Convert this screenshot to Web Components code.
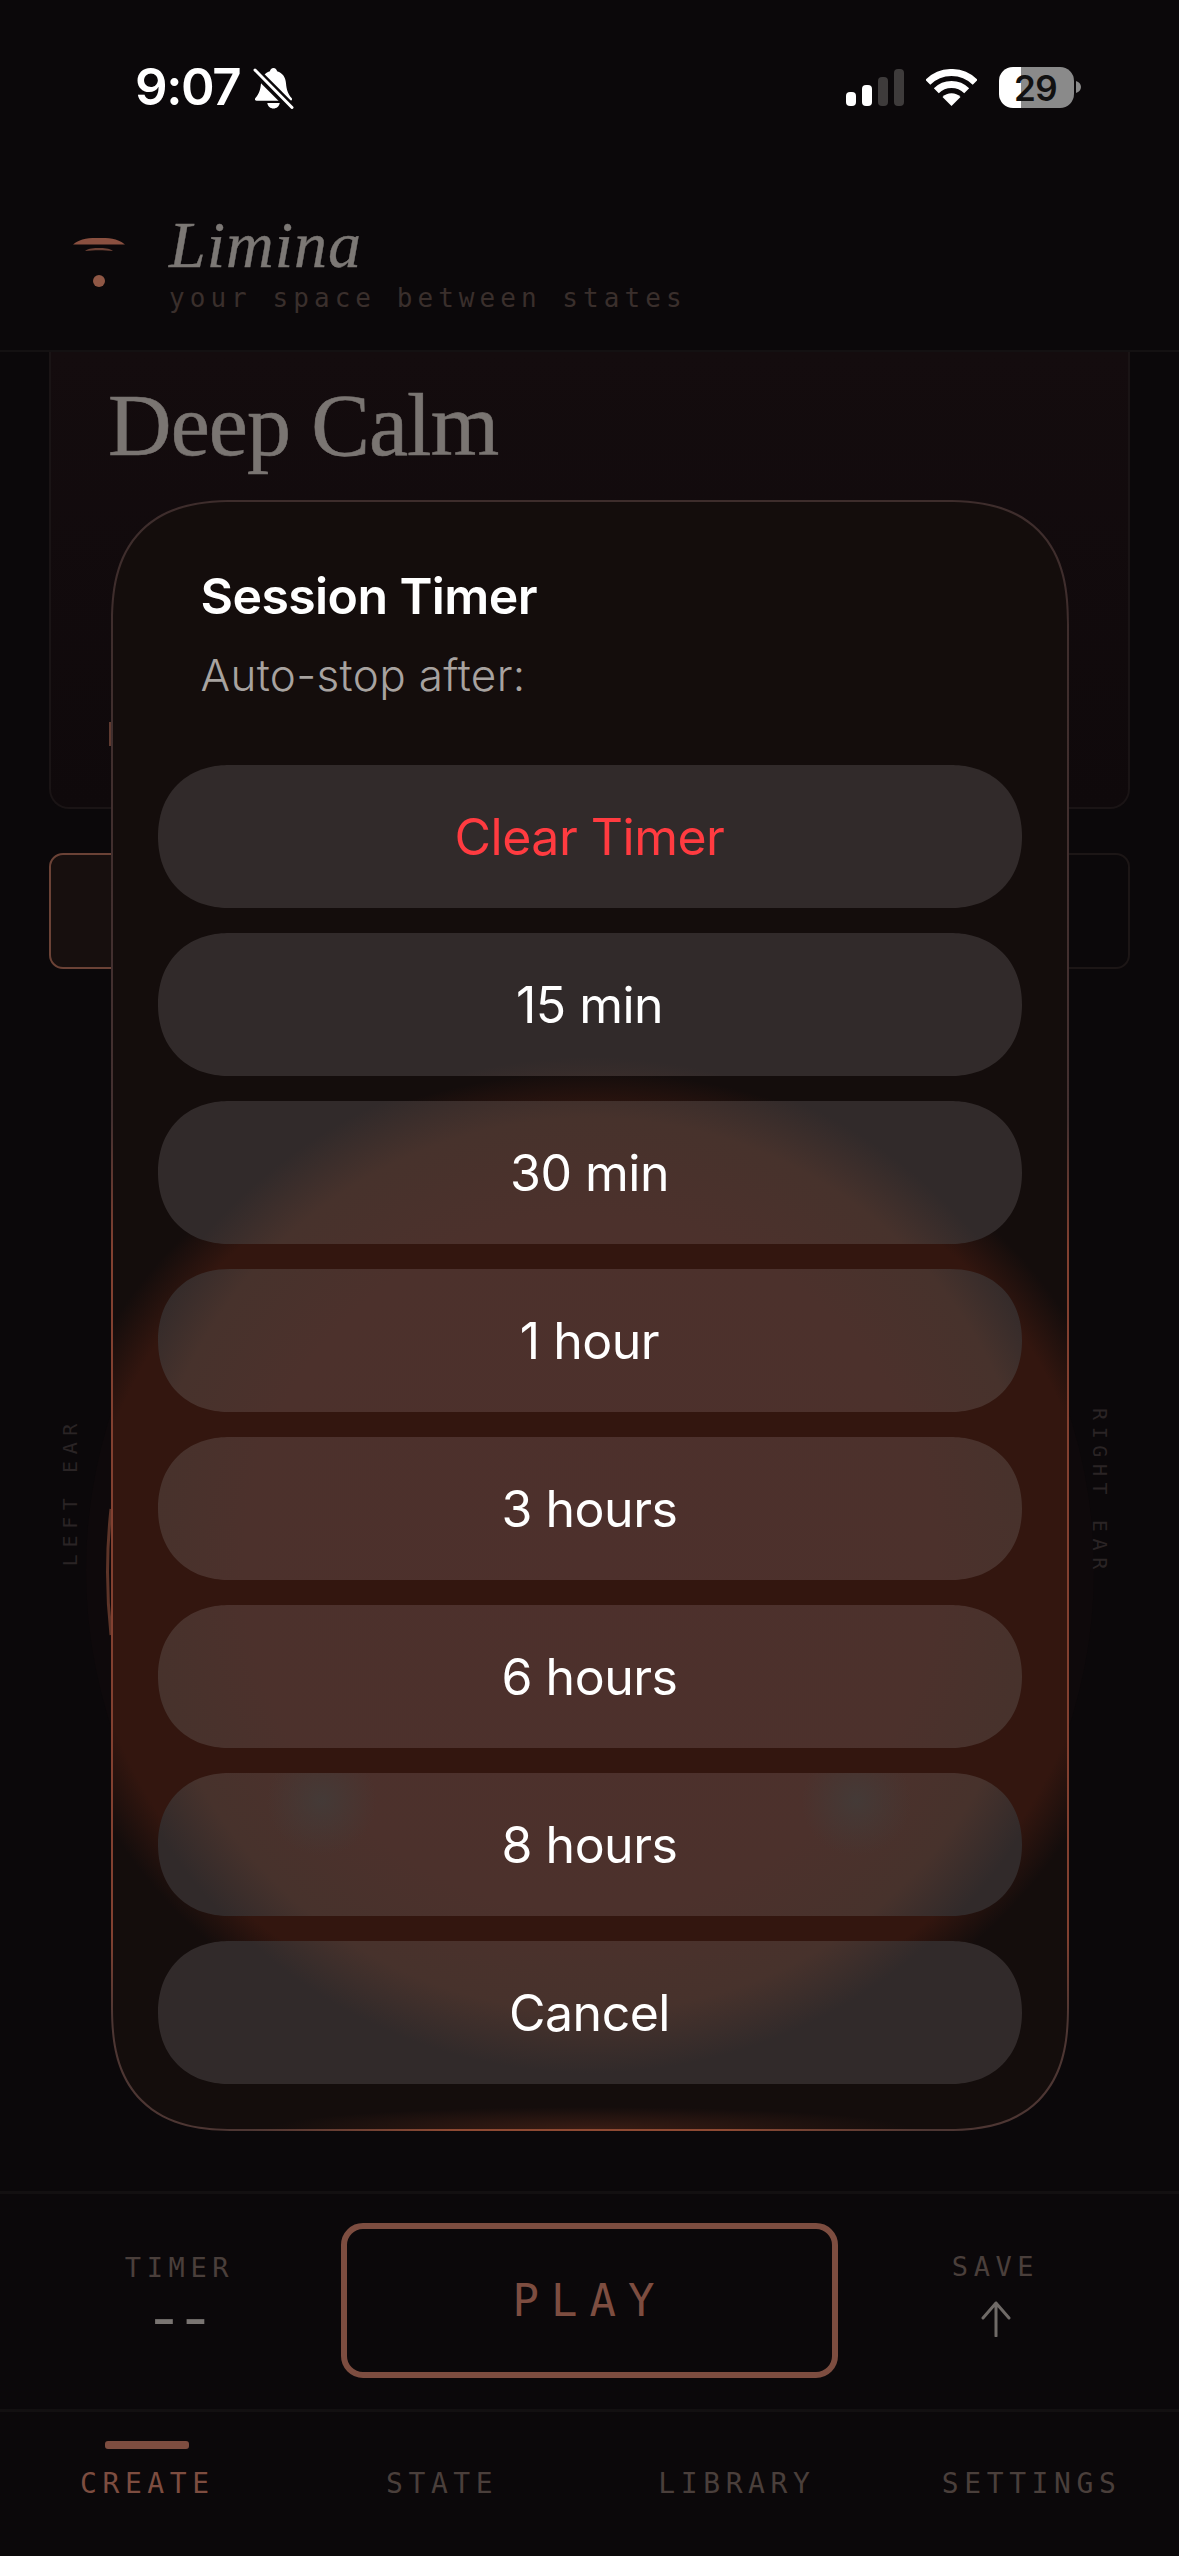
<!DOCTYPE html>
<html lang="en">
<head>
<meta charset="utf-8">
<title>Limina</title>
<style>
  html, body { margin: 0; padding: 0; background: #0b080a; }
  body { width: 1179px; height: 2556px; overflow: hidden; position: relative; }
  limina-app { --mono: "DejaVu Sans Mono", monospace; --sans: Inter, "Noto Sans", sans-serif; --serif: "Liberation Serif", serif; --accent: #7d4d40; --dim: #4a3f3b; }
</style>
</head>
<body>
<limina-app>
  <status-bar slot="status"></status-bar>
  <app-header slot="header"></app-header>
  <session-card slot="card" title="Deep Calm"></session-card>
  <mode-row slot="modes"></mode-row>
  <ear-stage slot="stage"></ear-stage>
  <action-bar slot="actions"></action-bar>
  <nav-bar slot="nav"></nav-bar>
  <timer-dialog slot="dialog">
    <dialog-option danger>Clear Timer</dialog-option>
    <dialog-option>15 min</dialog-option>
    <dialog-option>30 min</dialog-option>
    <dialog-option>1 hour</dialog-option>
    <dialog-option>3 hours</dialog-option>
    <dialog-option>6 hours</dialog-option>
    <dialog-option>8 hours</dialog-option>
    <dialog-option>Cancel</dialog-option>
  </timer-dialog>
</limina-app>

<script>
function define(name, html) {
  customElements.define(name, class extends HTMLElement {
    constructor() {
      super();
      this.attachShadow({ mode: 'open' }).innerHTML = html;
    }
  });
}

define('limina-app', `
  <style>
    :host { display: flex; flex-direction: column; width: 1179px; height: 2556px; position: relative; background: #0b080a; overflow: hidden; }
    main { flex: 1; display: flex; flex-direction: column; min-height: 0; padding: 0 49px; position: relative; }
    .overlay { position: absolute; inset: 0; display: flex; justify-content: center; align-items: flex-start; padding-top: 500px; box-sizing: border-box; }
  </style>
  <slot name="status"></slot>
  <slot name="header"></slot>
  <main>
    <slot name="card"></slot>
    <slot name="modes"></slot>
    <slot name="stage"></slot>
  </main>
  <slot name="actions"></slot>
  <slot name="nav"></slot>
  <div class="overlay"><slot name="dialog"></slot></div>
`);

define('status-bar', `
  <style>
    :host { display: flex; align-items: flex-start; height: 134px; padding: 60px 98px 0 135px; box-sizing: border-box; color: #fff; font-family: Inter, sans-serif; }
    .time { font-size: 51px; font-weight: 600; line-height: 54px; letter-spacing: -1.4px; }
    .bell { margin: 7px 0 0 13px; }
    .right { margin-left: auto; display: flex; align-items: flex-start; }
    .signal { margin: 9px 0 0 0; }
    .wifi { margin: 9px 0 0 22px; }
    .battery { margin: 7px 0 0 22px; width: 75px; height: 41px; border-radius: 14px; background: linear-gradient(90deg, #fff 29%, #8a8a8a 29%); color: #111; font-size: 35px; font-weight: 600; display: flex; align-items: center; justify-content: center; letter-spacing: -.5px; padding-right: 2px; box-sizing: border-box; }
    .nub { margin: 21px 0 0 2px; }
  </style>
  <div class="time">9:07</div>
  <svg class="bell" width="41" height="42" viewBox="0 0 41 42">
    <path fill="#fff" d="M20.500 1c2 0 3.200 1.300 3.600 3.200 5.500 1.600 8.400 6 8.900 12 .5 6 1.700 10.500 5.600 14.800 1 1.200.4 2.800-1.300 2.800H3.700c-1.700 0-2.300-1.600-1.300-2.800 3.900-4.300 5.100-8.800 5.600-14.800.5-6 3.400-10.400 8.900-12C17.300 2.300 18.500 1 20.500 1zM14.300 36h12.400c-.5 3.300-3 5.500-6.200 5.500s-5.700-2.200-6.200-5.500z"/>
    <path stroke="#0b080a" stroke-width="9" d="M0 2l40 40"/>
    <path stroke="#fff" stroke-width="3" stroke-linecap="round" d="M2 3l37 37.500"/>
  </svg>
  <div class="right">
    <svg class="signal" width="58" height="37" viewBox="0 0 58 37">
      <rect x="0" y="23" width="10" height="14" rx="4" fill="#fff"/>
      <rect x="16" y="16" width="10" height="21" rx="4" fill="#fff"/>
      <rect x="32" y="8" width="10" height="29" rx="4" fill="#3e3b3b"/>
      <rect x="48" y="0" width="10" height="37" rx="4" fill="#3e3b3b"/>
    </svg>
    <svg class="wifi" width="51" height="37" viewBox="0 0 51 37">
      <g fill="none" stroke="#fff" stroke-width="7">
        <path d="M1.800 13.300A33.500 33.500 0 0 1 49.200 13.300"/>
        <path d="M10.300 21.800A21.500 21.500 0 0 1 40.700 21.800"/>
      </g>
      <path fill="#fff" d="M25.500 37L16.500 28A12.700 12.700 0 0 1 34.500 28Z"/>
    </svg>
    <div class="battery">29</div>
    <svg class="nub" width="5" height="12" viewBox="0 0 5 12"><path fill="#8a8a8a" d="M0 0c3 1 5 3 5 6s-2 5-5 6z"/></svg>
  </div>
`);

define('app-header', `
  <style>
    :host { display: flex; align-items: flex-start; height: 218px; box-sizing: border-box; border-bottom: 2px solid #141112; padding: 0 0 0 70px; position: relative; }
    svg { margin: 101px 0 0 3px; flex: none; }
    .text { margin: 73px 0 0 44px; }
    h1 { margin: 0; font: italic 400 66px/75px var(--serif); color: #7c7875; letter-spacing: 1px; -webkit-text-stroke: .4px #7c7875; }
    p { margin: 0; font: 400 26px/33px var(--mono); color: #3a2f2c; letter-spacing: 5.05px; }
  </style>
  <svg width="52" height="52" viewBox="0 0 52 52">
    <path fill="#8a5040" d="M0 9.500C8 3 17 3 26 3s18 0 26 6.500H0z"/>
    <path fill="#6e4236" d="M12 16c4-3 9-3 14-3s10 0 14 3c-5-.6-9-.8-14-.8s-9 .2-14 .8z"/>
    <circle cx="26" cy="46" r="6" fill="#8f5745"/>
  </svg>
  <div class="text">
    <h1>Limina</h1>
    <p>your space between states</p>
  </div>
`);

define('session-card', `
  <style>
    :host { display: block; height: 457px; box-sizing: border-box; border: 2px solid #1a1415; border-top: 0; border-radius: 0 0 20px 20px; background: linear-gradient(180deg, #140c0e 0, #0f090b 100%); padding: 0 0 0 57px; position: relative; }
    h2 { margin: 0; font: 400 88px/100px var(--serif); color: #7a7572; letter-spacing: -.9px; padding-top: 24px; -webkit-text-stroke: .6px #7a7572; }
    .thumb { position: absolute; left: 58px; top: 370px; width: 4px; height: 24px; background: #5f3a30; }
  </style>
  <h2>Deep Calm</h2>
  <div class="thumb"></div>
`);

define('mode-row', `
  <style>
    :host { display: flex; gap: 24px; margin-top: 44px; height: 116px; }
    div { flex: 1; box-sizing: border-box; border: 2px solid #1c1616; border-radius: 14px; }
    .on { border-color: #6b4236; background: #170f0e; }
  </style>
  <div class="on"></div>
  <div></div>
`);

define('ear-stage', `
  <style>
    :host { flex: 1; display: flex; justify-content: space-between; align-items: center; position: relative; margin: 0 -49px; padding: 0 69px 176px 60px; box-sizing: border-box; }
    span { writing-mode: vertical-rl; font: 400 20px/20px var(--mono); letter-spacing: 6.6px; color: #2a2425; position: relative; }
    .left { transform: rotate(180deg); }
    .disc { position: absolute; left: 86px; top: 97px; width: 1008px; height: 1008px; border-radius: 50%; background: #0e090b; }
    svg { position: absolute; left: 98px; top: 538px; }
  </style>
  <div class="disc"></div>
  <svg width="20" height="130" viewBox="0 0 20 130"><path d="M13 2Q6 65 13 128" fill="none" stroke="#5d3428" stroke-width="3"/></svg>
  <span class="left">LEFT EAR</span>
  <span>RIGHT EAR</span>
`);

define('action-bar', `
  <style>
    :host { display: grid; grid-template-columns: 341px 497px 341px; height: 218px; box-sizing: border-box; border-top: 3px solid #131011; padding-top: 29px; }
    .side { display: flex; flex-direction: column; align-items: center; font: 400 27px/34px var(--mono); letter-spacing: 5.6px; color: var(--dim); }
    .timer { padding: 28px 0 0 18px; }
    .timer b { font-weight: 400; color: #7a7572; line-height: 40px; letter-spacing: -9px; font-size: 60px; margin-top: 12px; padding-right: 9px; transform: scaleX(1.16); }
    .save { padding: 27px 26px 0 0; }
    .save svg { margin-top: 17px; margin-left: 0; }
    .play { box-sizing: border-box; height: 155px; border: 6px solid var(--accent); border-radius: 22px; display: flex; align-items: center; justify-content: center; font: 400 44px/1 var(--mono); letter-spacing: 12px; color: var(--accent); }
  </style>
  <div class="side timer">TIMER<b>--</b></div>
  <div class="play">PLAY</div>
  <div class="side save">SAVE
    <svg width="30" height="36" viewBox="0 0 30 36"><path d="M15 35V2M2 17L15 2l13 15" fill="none" stroke="#6f6a67" stroke-width="3" stroke-linecap="round" stroke-linejoin="round"/></svg>
  </div>
`);

define('nav-bar', `
  <style>
    :host { display: flex; height: 147px; box-sizing: border-box; border-top: 3px solid #131011; padding-top: 29px; }
    a { flex: 1; display: flex; flex-direction: column; align-items: center; font: 400 28px/36px var(--mono); letter-spacing: 5.600px; color: var(--dim); }
    a::before { content: ""; width: 84px; height: 8px; border-radius: 3px; margin-bottom: 17px; }
    a.on { color: var(--accent); }
    a.on::before { background: var(--accent); }
  </style>
  <a class="on">CREATE</a><a>STATE</a><a>LIBRARY</a><a>SETTINGS</a>
`);

define('timer-dialog', `
  <style>
    :host { display: block; width: 958px; height: 1631px; box-sizing: border-box; padding: 0 45px; border: 2px solid transparent; border-radius: 125px; corner-shape: superellipse(1.35); font-family: var(--sans);
      background:
        radial-gradient(ellipse 320px 22px at 50% 100%, rgba(110,50,32,.4) 0, rgba(110,50,32,0) 100%) padding-box,
        radial-gradient(ellipse 555px 505px at 479px 1075px, #33160f 0, #33160f 91%, #140d0c 100%) padding-box,
        radial-gradient(ellipse 340px 40px at 50% 100%, #8f4a33 0, #8f4a33 40%, rgba(143,74,51,0) 100%) border-box,
        linear-gradient(180deg, #3e2d2c 0, #443030 38%, #824030 46%, #824030 88%, #4d3633 93%, #4d3633 100%) border-box;
    }
    header { padding: 0 0 0 43px; height: 263px; box-sizing: border-box; padding-top: 64px; }
    h3 { margin: 0; font: 600 50px/60px var(--sans); color: #fff; letter-spacing: -.6px; }
    p { margin: 21px 0 0; font: 300 44px/56px var(--sans); color: #a8a3a0; letter-spacing: .35px; }
    .list { display: flex; flex-direction: column; gap: 25px; }
  </style>
  <header>
    <h3>Session Timer</h3>
    <p>Auto-stop after:</p>
  </header>
  <div class="list"><slot></slot></div>
`);

define('dialog-option', `
  <style>
    :host { display: flex; align-items: center; justify-content: center; height: 143px; border-radius: 71.5px; corner-shape: superellipse(1.12); color: #fff; font: 420 50px/1 var(--sans); letter-spacing: -.5px;
      background-attachment: fixed;
      background-image:
        radial-gradient(circle 55px at 321px 1801px, #443a37 0, rgba(68,58,55,0) 100%),
        radial-gradient(circle 55px at 856px 1801px, #443a37 0, rgba(68,58,55,0) 100%),
        radial-gradient(circle 508px at 590px 1565px, #4d302c 0, #4c312c 68%, #47322c 88%, #312a2a 100%);
    }
    :host([danger]) { color: #ff3b40; }
  </style>
  <slot></slot>
`);
</script>
</body>
</html>
